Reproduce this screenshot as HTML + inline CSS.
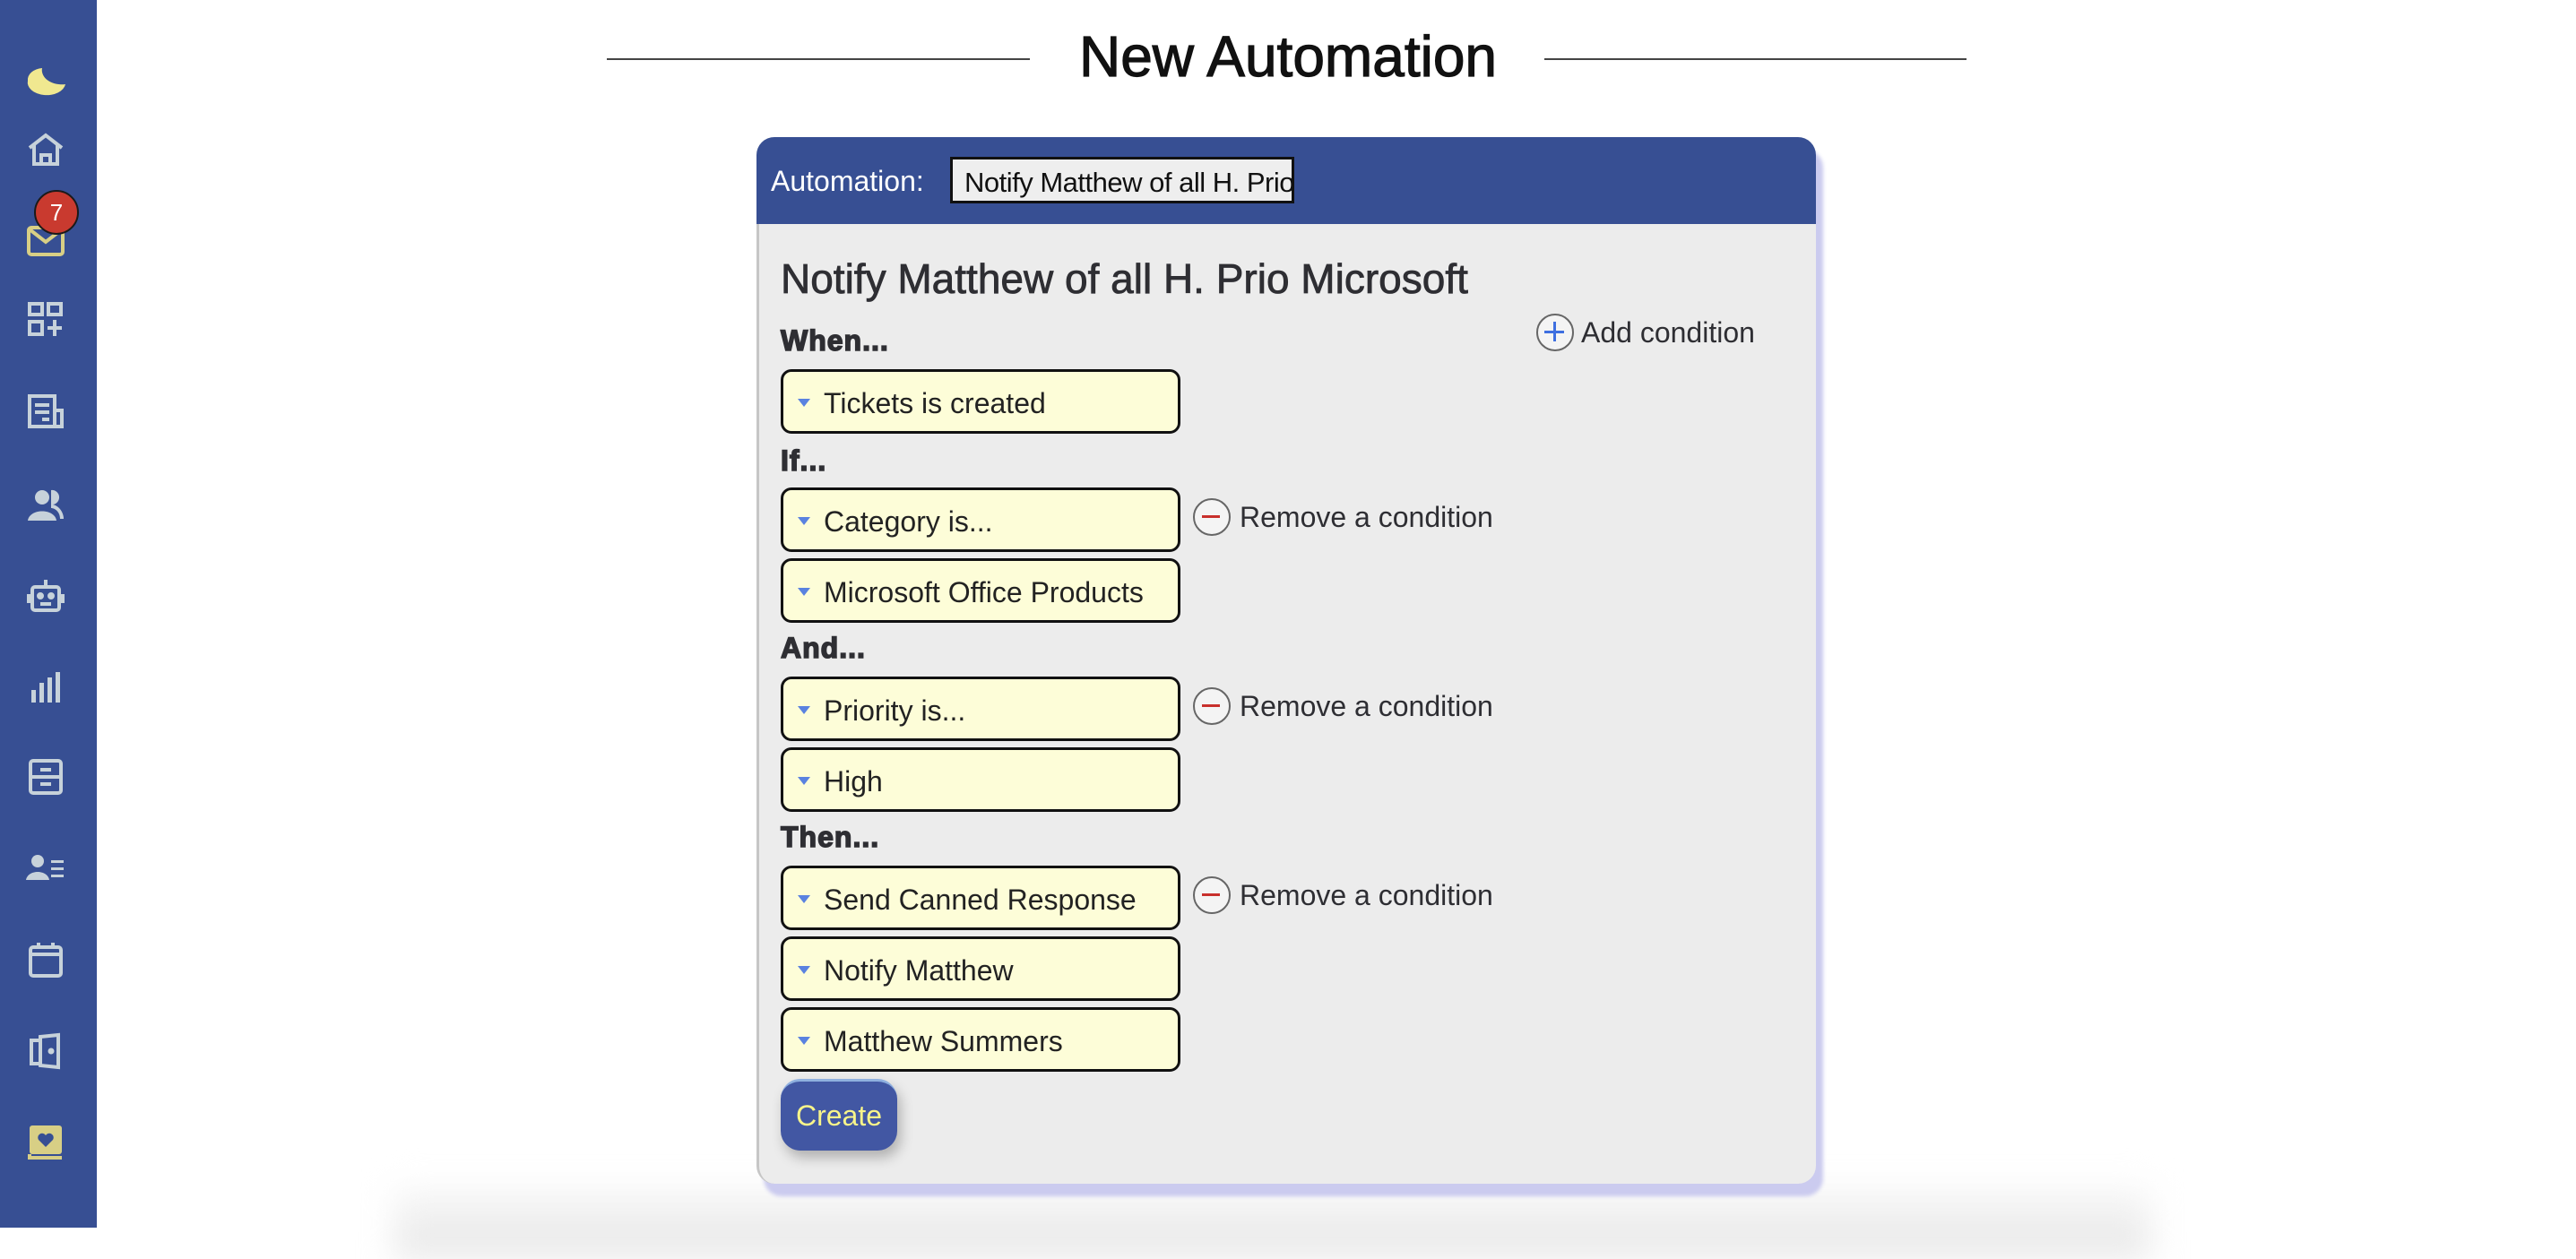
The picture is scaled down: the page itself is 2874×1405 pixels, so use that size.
<!DOCTYPE html>
<html><head><meta charset="utf-8"><style>
*{box-sizing:border-box;margin:0;padding:0}
body{width:2874px;height:1370px;background:#fff;position:relative;overflow:hidden;font-family:"Liberation Sans",sans-serif;color:#2e2e33}
#sb{position:absolute;left:0;top:0;width:108px;height:1370px;background:#374f93;z-index:2}
.ic{position:absolute;left:29px;width:44px;height:44px}
#badge{position:absolute;left:38px;top:212px;width:50px;height:50px;border-radius:50%;background:#c93a2f;border:2px solid #1a1a1a;color:#fff;font-size:26px;text-align:center;line-height:46px}
.line{position:absolute;top:65px;height:2px;background:#444}
h1{position:absolute;left:0;width:2874px;top:26px;text-align:center;font-size:64px;font-weight:normal;color:#111;-webkit-text-stroke:1.2px #111}
#floor{position:absolute;left:440px;top:1325px;width:1960px;height:80px;background:linear-gradient(#f8f8f8,#e6e6e6);filter:blur(18px)}
#card{position:absolute;left:844px;top:153px;width:1182px;height:1168px;background:#ececec;border-radius:20px;border-left:3px solid #c6c6c6;box-shadow:8px 14px 4px #cbcbef}
#hdr{position:absolute;left:844px;top:153px;width:1182px;height:97px;background:#374f93;border-radius:20px 20px 0 0}
#hdr span{position:absolute;left:16px;top:31px;color:#fff;font-size:32px}
#hdr .in{position:absolute;left:216px;top:22px;width:384px;height:52px;background:#eee;border:3px solid #111;font-size:31px;color:#111;padding:8px 0 0 13px;white-space:nowrap;overflow:hidden;letter-spacing:-.5px}
.t{position:absolute;font-size:46px;left:871px;top:284px;color:#2e2e33;-webkit-text-stroke:.8px #2e2e33}
.lbl{position:absolute;left:871px;font-size:32px;font-weight:bold;color:#2e2e33;-webkit-text-stroke:1.5px #2e2e33;letter-spacing:1px}
.box{position:absolute;left:871px;width:446px;height:72px;background:#fdfdd8;border:3px solid #111;border-radius:12px;font-size:32px;color:#222;padding:17px 0 0 45px}
.box:before{content:"";position:absolute;left:16px;top:30px;border-left:7px solid transparent;border-right:7px solid transparent;border-top:9px solid #5a82e0}
.rm{position:absolute;left:1331px;font-size:32px;color:#2e2e33;padding-left:52px;line-height:42px}
.rm:before{content:"";position:absolute;left:0;top:0;width:38px;height:38px;border:2px solid #666;border-radius:50%;background:#f4f4f4}
.rm:after{content:"";position:absolute;left:10px;top:19px;width:20px;height:3px;background:#c8302c}
#add{position:absolute;left:1714px;top:350px;font-size:32px;color:#2e2e33;padding-left:50px;line-height:42px}
#add:before{content:"";position:absolute;left:0;top:0;width:38px;height:38px;border:2px solid #666;border-radius:50%;background:#f4f4f4}
#add i{position:absolute;left:9px;top:19px;width:22px;height:3px;background:#3e6fe0}
#add b{position:absolute;left:19px;top:9px;width:3px;height:22px;background:#3e6fe0}
#btn{position:absolute;left:871px;top:1204px;width:130px;height:80px;background:#4257a3;border-radius:22px;border-top:3px solid #8fb0df;color:#f8f48a;font-size:32px;text-align:center;line-height:76px;box-shadow:4px 8px 14px rgba(0,0,0,.25)}
</style></head><body>
<div id="floor"></div>
<div id="sb">
<svg class="ic" style="top:66px;left:27px;width:50px" viewBox="0 0 50 44"><path d="M4 24 A21 14 0 0 0 46 28 A22 16 0 0 1 20 10 A18 13 0 0 0 4 24Z" fill="#f0e890"/></svg>
<svg class="ic" style="top:145px" viewBox="0 0 44 44" fill="none" stroke="#c7d2da" stroke-width="4"><path d="M4 20 L22 6 L40 20 M9 16 V38 H35 V16 M17 38 V28 H27 V38"/></svg>
<svg class="ic" style="top:246px" viewBox="0 0 44 44" fill="none" stroke="#d8cf85" stroke-width="4"><rect x="3" y="8" width="38" height="30" rx="3"/><path d="M4 10 L22 24 L40 10"/></svg>
<div id="badge">7</div>
<svg class="ic" style="top:335px" viewBox="0 0 44 44" fill="none" stroke="#c7d2da" stroke-width="4"><rect x="4" y="4" width="14" height="12"/><rect x="4" y="24" width="14" height="14"/><rect x="25" y="4" width="14" height="12"/><path d="M32 22 V40 M24 31 H40"/></svg>
<svg class="ic" style="top:436px" viewBox="0 0 44 44" fill="none" stroke="#c7d2da" stroke-width="4"><path d="M4 6 H32 V40 H4Z M32 22 H40 V40 H32 M10 16 H26 M10 24 H26 M18 32 H26"/></svg>
<svg class="ic" style="top:541px" viewBox="0 0 44 44" fill="#c7d2da"><circle cx="18" cy="14" r="8"/><path d="M2 40 C4 26 32 26 34 40Z"/><path d="M28 6 A8 8 0 0 1 30 22 C38 24 42 32 42 38 L38 38 C38 30 32 26 28 26Z"/></svg>
<svg class="ic" style="top:643px" viewBox="0 0 44 44" fill="none" stroke="#c7d2da" stroke-width="4"><rect x="7" y="12" width="30" height="26" rx="3"/><path d="M22 4 V12 M3 20 V30 M41 20 V30 M16 31 H28"/><circle cx="16" cy="22" r="2" fill="#c7d2da"/><circle cx="28" cy="22" r="2" fill="#c7d2da"/></svg>
<svg class="ic" style="top:744px" viewBox="0 0 44 44" fill="#c7d2da"><rect x="6" y="26" width="5" height="14"/><rect x="15" y="18" width="5" height="22"/><rect x="24" y="12" width="5" height="28"/><rect x="33" y="6" width="5" height="34"/></svg>
<svg class="ic" style="top:845px" viewBox="0 0 44 44" fill="none" stroke="#c7d2da" stroke-width="4"><rect x="5" y="4" width="34" height="36" rx="3"/><path d="M5 22 H39 M16 14 H28 M16 30 H28"/></svg>
<svg class="ic" style="top:946px" viewBox="0 0 44 44" fill="#c7d2da"><circle cx="13" cy="15" r="7"/><path d="M0 36 C2 24 24 24 26 36Z"/><rect x="28" y="14" width="14" height="3"/><rect x="28" y="22" width="14" height="3"/><rect x="28" y="30" width="14" height="3"/></svg>
<svg class="ic" style="top:1049px" viewBox="0 0 44 44" fill="none" stroke="#c7d2da" stroke-width="4"><rect x="5" y="8" width="34" height="32" rx="3"/><path d="M5 16 H39 M14 3 V10 M30 3 V10"/></svg>
<svg class="ic" style="top:1151px" viewBox="0 0 44 44" fill="none" stroke="#c7d2da" stroke-width="4"><path d="M6 10 H16 V36 H6Z M16 6 L36 4 V40 L16 38Z"/><circle cx="28" cy="22" r="1.5" fill="#c7d2da"/></svg>
<svg class="ic" style="top:1252px" viewBox="0 0 44 44"><rect x="4" y="4" width="36" height="32" rx="3" fill="#d8cf85"/><path d="M4 36 V40 H40" stroke="#d8cf85" stroke-width="4" fill="none"/><path d="M22 28 L14 20 A4 4 0 0 1 22 15 A4 4 0 0 1 30 20Z" fill="#374f93"/></svg>
</div>
<div class="line" style="left:677px;width:472px"></div>
<div class="line" style="left:1723px;width:471px"></div>
<h1>New Automation</h1>
<div id="card"></div>
<div id="hdr"><span>Automation:</span><div class="in">Notify Matthew of all H. Prio Microsoft</div></div>
<div class="t">Notify Matthew of all H. Prio Microsoft</div>
<div id="add"><i></i><b></b>Add condition</div>
<div class="lbl" style="top:362px">When...</div>
<div class="box" style="top:412px">Tickets is created</div>
<div class="lbl" style="top:496px">If...</div>
<div class="box" style="top:544px">Category is...</div>
<div class="rm" style="top:556px">Remove a condition</div>
<div class="box" style="top:623px">Microsoft Office Products</div>
<div class="lbl" style="top:705px">And...</div>
<div class="box" style="top:755px">Priority is...</div>
<div class="rm" style="top:767px">Remove a condition</div>
<div class="box" style="top:834px">High</div>
<div class="lbl" style="top:916px">Then...</div>
<div class="box" style="top:966px">Send Canned Response</div>
<div class="rm" style="top:978px">Remove a condition</div>
<div class="box" style="top:1045px">Notify Matthew</div>
<div class="box" style="top:1124px">Matthew Summers</div>
<div id="btn">Create</div>
</body></html>
